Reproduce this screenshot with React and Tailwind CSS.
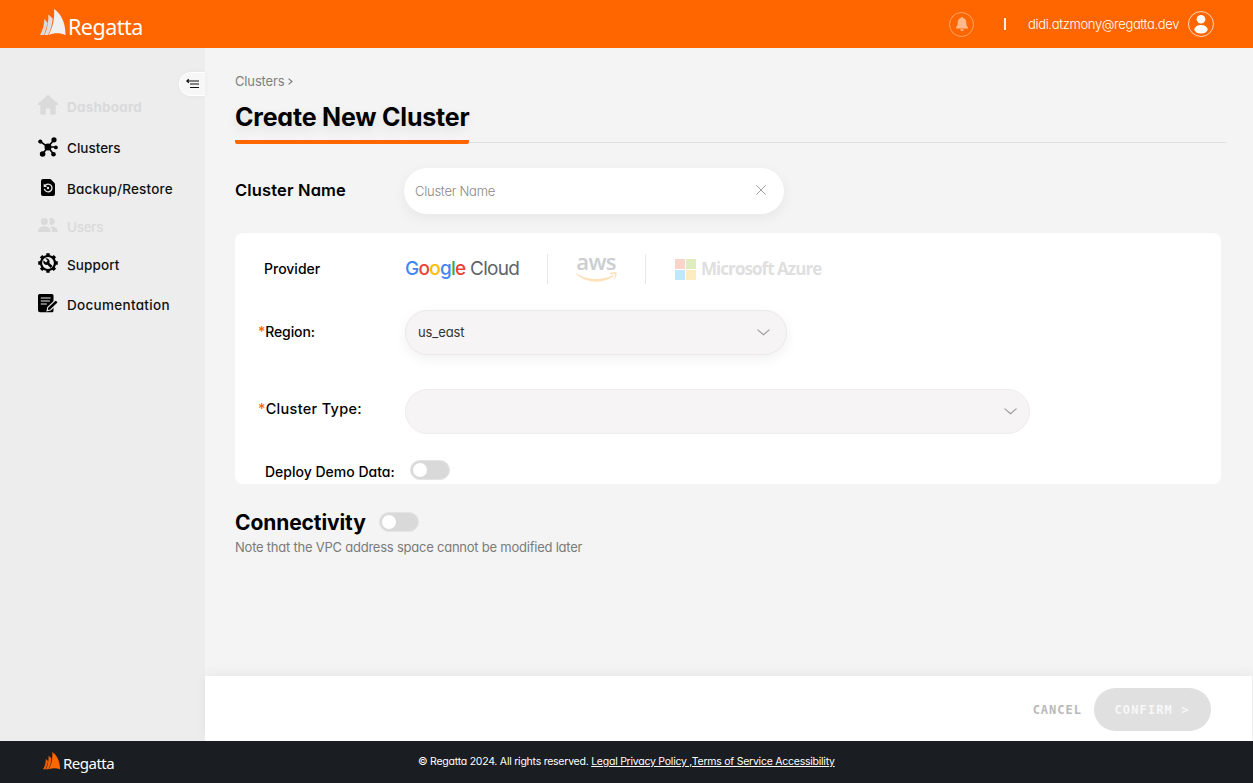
import React from "react";

function RegattaMark({ className, shades }) {
  return (
    <svg className={className} viewBox="0 0 27 27" fill="none">
      <path d="M0 26 C3 21 4.4 15 4.2 10 L7.8 14 C6.6 18 5 23 4.2 26 Z" fill={shades[0]} />
      <path d="M4.6 26 C7.6 19 8.6 12 8.4 5.6 L12.6 9.5 C12.6 15 10.4 22 8 26 Z" fill={shades[1]} />
      <path d="M8.6 26 C13 18 14.8 9 14 0 C21.5 5 25.4 14 25.6 26 C20 23.6 13.5 24 8.6 26 Z" fill={shades[2]} />
    </svg>
  );
}

function HomeIcon() {
  return (
    <svg className="mb-[3px] h-5 w-5" viewBox="0 0 20 20" fill="currentColor">
      <path d="M9.1.5a1.3 1.3 0 0 1 1.8 0l8.7 7.8c.8.8.3 2-.7 2h-1.1v7.4c0 1.3-.8 2.1-2 2.1h-2.6a1 1 0 0 1-1-1v-4.1c0-.7-.5-1.2-1.2-1.2H9c-.7 0-1.2.5-1.2 1.2v4.1a1 1 0 0 1-1 1H4.2c-1.2 0-2-.8-2-2.1v-7.4H1.1c-1 0-1.5-1.2-.7-2z" />
    </svg>
  );
}

function ClustersIcon() {
  return (
    <svg className="mb-[2px] h-5 w-5" viewBox="0 0 20 20">
      <g stroke="#000" strokeWidth="1.7">
        <path d="M10 10 2.4 4.6M10 10l6-7.3M10 10h8M10 10l-5.3 6.8M10 10l5.4 7" />
      </g>
      <circle cx="10" cy="10" r="3.5" />
      <circle cx="2.3" cy="4.6" r="2.1" />
      <circle cx="16" cy="2.8" r="2.6" />
      <circle cx="17.9" cy="10.4" r="1.9" />
      <circle cx="4.6" cy="17" r="2.8" />
      <circle cx="15.5" cy="17.3" r="2.3" />
    </svg>
  );
}

function BackupIcon() {
  return (
    <svg className="mb-[2px] h-[17px] w-5" viewBox="0 0 20 17">
      <path d="M5 0h7.5L17 4.6V15a2 2 0 0 1-2 2H5a2 2 0 0 1-2-2V2a2 2 0 0 1 2-2z" />
      <path d="M6.9 6.7a3.9 3.9 0 1 1-.6 3.2" fill="none" stroke="#ededed" strokeWidth="1.3" />
      <path d="M5.7 4.6v3.3H9z" fill="#ededed" />
      <circle cx="10" cy="9" r="1.2" fill="#ededed" />
    </svg>
  );
}

function UsersIcon() {
  return (
    <svg className="mb-[4px] h-[14px] w-5" viewBox="0 0 20 14" fill="currentColor">
      <circle cx="6.3" cy="3.5" r="3.5" />
      <path d="M0 14c0-4 2.6-5.6 6.3-5.6S12.6 10 12.6 14z" />
      <path d="M11.2 6.1a4.6 4.6 0 0 0 0-5.2 3.4 3.4 0 1 1 0 5.2z" />
      <path d="M14.2 14c0-2.5-.8-4.2-2.3-5.4 4.3-.7 7.8.9 7.8 5.4z" />
    </svg>
  );
}

function SupportIcon() {
  return (
    <svg className="mb-[4px] h-5 w-5" viewBox="0 0 20 20">
      <circle cx="10" cy="10" r="7" fill="none" stroke="#000" strokeWidth="2.2" />
      <path
        d="M10 .2v3M10 16.8v3M.2 10h3M16.8 10h3M3.1 3.1l2.1 2.1M14.8 14.8l2.1 2.1M16.9 3.1l-2.1 2.1M5.2 14.8l-2.1 2.1"
        stroke="#000"
        strokeWidth="3.4"
      />
      <path d="m7.4 5.4 2.3 2.3-1.8 1.8-2.3-2.3c-.6 1.5-.3 2.9.7 3.8.9.9 2 1.1 3.1.8l3.2 3.2 1.9-1.9-3.1-3.2c.4-1.2.2-2.4-.6-3.3-.9-1-2.2-1.4-3.4-1.2z" />
    </svg>
  );
}

function DocsIcon() {
  return (
    <svg className="mb-[2px] h-5 w-5" viewBox="0 0 20 20">
      <path d="M1.5 1H14a1.5 1.5 0 0 1 1.5 1.5V17a2 2 0 0 1-2 2.300H2A2 2 0 0 1 0 17.300V2.500A1.500 1.500 0 0 1 1.500 1z" />
      <path d="M2.8 5h9.8M2.8 8h9M2.8 11h6" stroke="#ededed" strokeWidth="1.2" />
      <path d="m9 17.8.8-3.4 6.8-6.6a1.500 1.500 0 0 1 2.200 0l.5.5a1.500 1.500 0 0 1 0 2.200l-6.800 6.500z" stroke="#ededed" strokeWidth="1.1" />
    </svg>
  );
}

const navItems = [
  { label: "Dashboard", icon: HomeIcon, row: "h-[41px] text-[#dadada]", text: "pt-px font-bold tracking-[0.2px]" },
  { label: "Clusters", icon: ClustersIcon, row: "h-[41px] text-[#111]", text: "pt-px font-medium tracking-[0px]" },
  { label: "Backup/Restore", icon: BackupIcon, row: "h-10 text-[#111]", text: "pt-px font-medium tracking-[0.18px]" },
  { label: "Users", icon: UsersIcon, row: "h-[38px] text-[#dadada]", text: "pb-px font-medium tracking-[-0.3px]" },
  { label: "Support", icon: SupportIcon, row: "h-[38px] text-[#111]", text: "pb-px font-medium tracking-[0.1px]" },
  { label: "Documentation", icon: DocsIcon, row: "h-10 text-[#111]", text: "pt-px font-medium tracking-[0.3px]" },
];

function Toggle() {
  return (
    <span className="flex h-5 w-10 shrink-0 items-center rounded-full border border-[#e4e4e4] bg-[#d9d9d9] px-[2px]">
      <span className="h-[14px] w-[14px] rounded-full bg-white" />
    </span>
  );
}

function Chevron() {
  return (
    <svg className="h-[7px] w-[13px]" viewBox="0 0 13 7" fill="none" stroke="#999" strokeWidth="1.1">
      <path d="m.5.7 6 5 6-5" />
    </svg>
  );
}

function Header() {
  return (
    <header className="flex h-12 shrink-0 items-center bg-[#ff6600] pl-10 pr-[39px]">
      <div className="flex h-12 items-start">
        <RegattaMark className="mt-[9px] h-[27px] w-[27px]" shades={["#d9d9d9", "#dedede", "#f0f0f0"]} />
        <span className="ml-[1px] mt-[13px] font-['Noto_Sans'] text-[21.5px] leading-7 tracking-[-0.5px] text-white [font-feature-settings:normal]">Regatta</span>
      </div>
      <div className="ml-auto flex items-center">
        <span className="flex h-[25px] w-[25px] items-center justify-center rounded-full border border-[#ffa366]">
          <svg className="h-[14px] w-3" viewBox="0 0 12 14" fill="#ffb98c">
            <path d="M5 1a1 1 0 0 1 2 0c2.2.5 3.3 2.3 3.3 4.5 0 2.8.5 3.8 1.7 4.9v1.1H0v-1.1c1.2-1.1 1.7-2.1 1.7-4.9C1.7 3.3 2.8 1.5 5 1zM4.3 12.2h3.4A1.7 1.7 0 0 1 6 14a1.7 1.7 0 0 1-1.7-1.8z" />
          </svg>
        </span>
        <span className="ml-[30px] h-3 w-[2px] bg-[#fff0e6]" />
        <span className="ml-[22px] w-[151px] whitespace-nowrap pt-px text-[13px] font-light tracking-[-0.34px] text-white">didi.atzmony@regatta.dev</span>
        <span className="ml-[9px] flex h-[26px] w-[26px] items-center justify-center rounded-full border border-[#ffd9bf]">
          <svg className="h-[19px] w-[14px]" viewBox="0 0 14 19" fill="#fff">
            <circle cx="7" cy="4.3" r="4.3" />
            <ellipse cx="7" cy="14.3" rx="6.6" ry="4.3" />
          </svg>
        </span>
      </div>
    </header>
  );
}

function Sidebar() {
  return (
    <aside className="flex w-[205px] shrink-0 flex-col bg-[#ededed]">
      <div className="flex h-[38px] justify-end pt-6">
        <span className="flex h-6 w-[26px] items-center rounded-l-full border border-r-0 border-white bg-[#f7f7f7] pl-[6px] shadow-[0_0_6px_rgba(0,0,0,0.04)]">
          <svg className="h-[10px] w-[14px]" viewBox="0 0 14 10" stroke="#111" strokeWidth="1.2">
            <path d="M1 2h12M4 5h9M4 8.5h9M2.8.2.8 2l2 1.8" fill="none" />
          </svg>
        </span>
      </div>
      <nav className="flex flex-col pl-[37.5px]">
        {navItems.map(({ label, icon: Icon, row, text }) => (
          <a key={label} className={"flex items-center " + row}>
            <Icon />
            <span className={"ml-[9.5px] whitespace-nowrap text-[13.5px] leading-5 " + text}>{label}</span>
          </a>
        ))}
      </nav>
    </aside>
  );
}

function Providers() {
  return (
    <div className="flex items-center">
      <span className="w-[142px] whitespace-nowrap font-['Inter'] text-[19px] leading-6 tracking-[-0.75px] text-[#5f6368]">
        <span className="font-medium">
          <span className="text-[#4285f4]">G</span>
          <span className="text-[#ea4335]">o</span>
          <span className="text-[#fbbc04]">o</span>
          <span className="text-[#4285f4]">g</span>
          <span className="text-[#34a853]">l</span>
          <span className="text-[#ea4335]">e</span>
        </span>{" "}
        Cloud
      </span>
      <span className="h-[30px] w-px bg-[#e8e8e8]" />
      <span className="ml-[27px] mr-px flex w-[42px] flex-col items-center">
        <span className="h-[17px] font-['Open_Sans'] text-[22px] font-semibold leading-[12px] tracking-[-0.7px] text-[#cbcdd0] [font-feature-settings:normal]">aws</span>
        <svg className="h-[10px] w-[41px]" viewBox="0 0 41 10" fill="#ffe0b8">
          <path d="M.5 1.6C12 8.6 26 8.6 36.5 3.3c1-.4 1.7.6.9 1.3C27 12 10 11.3.3 2.3c-.4-.4-.1-.9.2-.7z" />
          <path d="M34 1.4c2-1.5 6-1.4 6.5-.7.5.8-.2 5-2.1 6.7-.4.3-.7.1-.5-.3.5-1.2 1.5-3.9 1.1-4.5s-3.2-.4-4.6-.2c-.5 0-.8-.6-.4-1z" />
        </svg>
      </span>
      <span className="ml-[27px] h-[30px] w-px bg-[#e8e8e8]" />
      <span className="ml-[29px] mt-[2px] grid h-[21px] w-[21px] grid-cols-2 gap-px">
        <span className="bg-[#fcd3c8]" />
        <span className="bg-[#dfecbf]" />
        <span className="bg-[#bfe8fc]" />
        <span className="bg-[#ffebbf]" />
      </span>
      <span className="ml-[5px] whitespace-nowrap pt-px font-['Open_Sans'] text-[17px] font-bold leading-6 tracking-[-0.95px] text-[#dfdfdf] [font-feature-settings:normal]">Microsoft Azure</span>
    </div>
  );
}

function Content() {
  return (
    <section className="flex flex-1 flex-col pl-[30px] pr-[27px]">
      <div className="mt-[23px] flex h-5 gap-1 text-[13px] leading-5 tracking-[-0.15px] text-[#808080]">
        <span>Clusters</span>
        <svg className="mt-[7px] h-[7px] w-[5px]" viewBox="0 0 5 7" fill="none" stroke="#777" strokeWidth="1.1">
          <path d="m.6.6 3.4 2.900L.6 6.400" />
        </svg>
      </div>
      <div className="mt-[9px] flex h-11 items-end">
        <div className="h-11 w-[234px] border-b-4 border-[#ff6600] [border-radius:0_0_2px_2px]">
          <h1 className="whitespace-nowrap text-[25px] font-bold leading-[34px] tracking-[-0.2px] text-black [text-shadow:0_4px_12px_rgba(0,0,0,0.1)]">Create New Cluster</h1>
        </div>
        <div className="mb-[1px] h-px flex-1 bg-[#dedede]" />
      </div>

      <div className="mt-6 flex h-[46px] items-center">
        <label className="w-[169px] whitespace-nowrap pb-[2px] text-[16.5px] font-semibold tracking-[0.15px] text-black">Cluster Name</label>
        <div className="flex h-[46px] w-[380px] items-center justify-between rounded-full bg-white pl-[11px] pr-[18px] shadow-[0_4px_14px_rgba(0,0,0,0.06)]">
          <span className="pt-px text-[13px] font-light tracking-[-0.25px] text-[#8a8a8a]">Cluster Name</span>
          <svg className="mb-[2px] h-[10px] w-[10px]" viewBox="0 0 10 10" stroke="#a0a0a0">
            <path d="m.3.3 9.4 9.4M9.7.3.3 9.7" />
          </svg>
        </div>
      </div>

      <div className="mt-[19px] flex h-[251px] w-[986px] flex-col rounded-lg bg-white text-black">
        <div className="mb-[6px] flex h-[71px] items-center pl-[29px]">
          <span className="w-[141px] pt-px text-sm font-medium">Provider</span>
          <Providers />
        </div>
        <div className="flex h-[45px] items-center pl-[23px]">
          <span className="w-[147px] whitespace-nowrap pb-[2px] text-[14px] font-medium tracking-[-0.1px]"><span className="text-[#ff6600]">*</span>Region:</span>
          <div className="flex h-[45px] w-[382px] items-center justify-between rounded-full border border-[#ebe9ea] bg-[#f6f4f5] pl-3 pr-4 shadow-[0_4px_14px_rgba(0,0,0,0.06)]">
            <span className="text-[13px] tracking-[-0.1px] text-[#333]">us_east</span>
            <Chevron />
          </div>
        </div>
        <div className="mt-[34px] flex h-[45px] items-center pl-[23px]">
          <span className="w-[147px] whitespace-nowrap pb-[5px] text-[14.5px] font-medium tracking-[0.3px]"><span className="text-[#ff6600]">*</span>Cluster Type:</span>
          <div className="flex h-[45px] w-[625px] items-center justify-end rounded-full border border-[#eeeced] bg-[#f6f4f5] pr-3">
            <Chevron />
          </div>
        </div>
        <div className="mt-[26px] flex h-5 items-center pl-[30px]">
          <span className="w-[145px] whitespace-nowrap pt-[3px] text-[14px] font-medium leading-5 tracking-[0px]">Deploy Demo Data:</span>
          <Toggle />
        </div>
      </div>

      <div className="mt-[28px] flex h-5 items-center">
        <h2 className="w-[144.4px] whitespace-nowrap pt-[2px] text-[21px] font-bold leading-5 tracking-[-0.1px] text-black">Connectivity</h2>
        <Toggle />
      </div>
      <p className="mt-[5px] text-[13px] leading-5 tracking-[-0.23px] text-[#7b7b7b]">Note that the VPC address space cannot be modified later</p>
    </section>
  );
}

export default function App() {
  return (
    <div className="flex h-[783px] w-[1253px] flex-col overflow-hidden bg-[#f4f4f4] font-['Inter',sans-serif] [font-feature-settings:'cv11']">
      <Header />
      <div className="flex h-[693px]">
        <Sidebar />
        <main className="flex flex-1 flex-col">
          <Content />
          <div className="mr-px flex h-[65px] items-center justify-end bg-white pr-[41.5px] pt-[2px] font-['DejaVu_Sans_Mono',monospace] text-[12px] font-bold shadow-[0_-3px_10px_rgba(0,0,0,0.05)]">
            <span className="pt-px tracking-[1px] text-[#b9b9b9]">CANCEL</span>
            <span className="ml-[11.5px] flex h-[43px] w-[117px] items-center justify-center rounded-full bg-[#e0e0e0] pt-px tracking-[1.1px] text-[#f7f7f7]">CONFIRM &gt;</span>
          </div>
        </main>
      </div>
      <footer className="flex h-[42px] items-center bg-[#1a1d21] pl-[43px] text-white">
        <RegattaMark className="mb-[3px] h-[18px] w-[18px]" shades={["#e85c00", "#f06000", "#ff6600"]} />
        <span className="ml-[2px] w-[355px] pt-[2px] font-['Noto_Sans'] text-[15px] leading-5 tracking-[-0.5px] [font-feature-settings:normal]">Regatta</span>
        <span className="whitespace-nowrap text-[10.5px] tracking-[-0.24px]">
          © Regatta 2024. All rights reserved. <a className="underline">Legal Privacy Policy ,Terms of Service Accessibility</a>
        </span>
      </footer>
    </div>
  );
}
